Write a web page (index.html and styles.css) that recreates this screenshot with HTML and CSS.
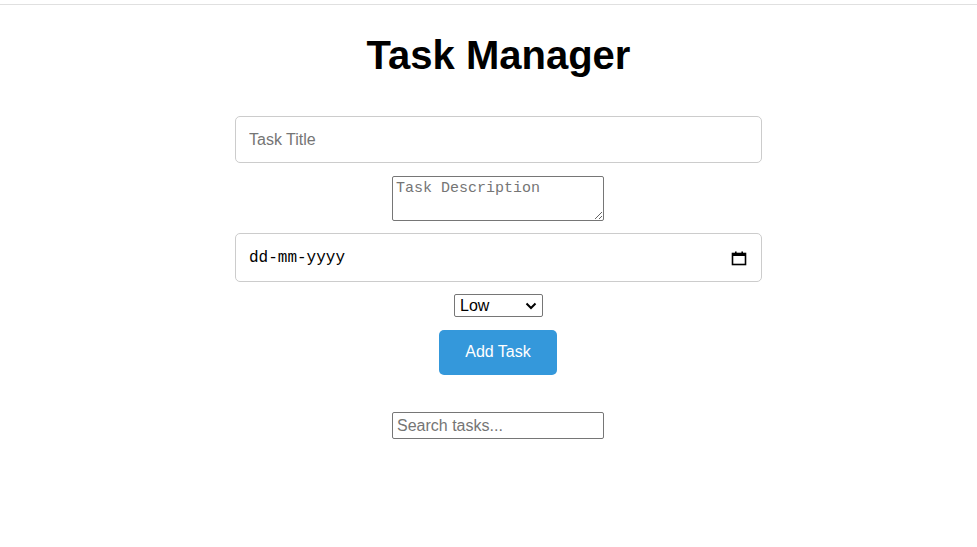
FILE: index.html
```html
<!DOCTYPE html>
<html>
<head>
<meta charset="utf-8">
<link rel="stylesheet" href="styles.css">
</head>
<body>
<div class="topline"></div>
<div class="page">
  <div class="app">
    <h1 class="title">Task Manager</h1>
    <form class="task-form">
      <input class="field field-title" type="text" placeholder="Task Title">
      <textarea class="desc" placeholder="Task Description"></textarea>
      <div class="field field-date">
        <span class="date-text">dd-mm-yyyy</span>
        <svg class="cal" width="16" height="16" viewBox="0 0 16 16">
          <rect x="1.5" y="3.5" width="13" height="11" fill="none" stroke="#000" stroke-width="1.6"/>
          <rect x="1.5" y="3" width="13" height="3" fill="#000"/>
          <rect x="4" y="1.5" width="1.6" height="3" fill="#000"/>
          <rect x="10.4" y="1.5" width="1.6" height="3" fill="#000"/>
        </svg>
      </div>
      <div class="select">
        <span>Low</span>
        <svg width="12" height="8" viewBox="0 0 12 8"><path d="M1.5 1.5 L6 6 L10.5 1.5" fill="none" stroke="#000" stroke-width="2"/></svg>
      </div>
      <button class="add-btn" type="button">Add Task</button>
    </form>
    <input class="search" type="text" placeholder="Search tasks...">
  </div>
</div>
</body>
</html>
```
FILE: styles.css
```css
html, body {
  margin: 0;
  padding: 0;
  background: #fff;
  font-family: "Liberation Sans", Arial, sans-serif;
}
.topline {
  height: 4px;
  border-bottom: 1px solid #e0e0e0;
}
.page {
  padding-left: 20px;
  display: flex;
  justify-content: center;
}
.app {
  width: 527px;
  display: flex;
  flex-direction: column;
  align-items: center;
}
.title {
  margin: 27px 0 0;
  height: 47px;
  font-size: 40px;
  line-height: 47px;
  font-weight: bold;
  color: #000;
}
.task-form {
  margin-top: 37px;
  width: 100%;
  display: flex;
  flex-direction: column;
  align-items: center;
}
.field {
  box-sizing: border-box;
  width: 527px;
  border: 1px solid #ccc;
  border-radius: 5px;
  background: #fff;
}
.field-title {
  height: 47px;
  padding: 0 13px;
  font-family: "Liberation Sans", Arial, sans-serif;
  font-size: 16px;
  color: #000;
  outline: none;
}
.field-title::placeholder {
  color: #757575;
}
.desc {
  box-sizing: border-box;
  margin-top: 13px;
  margin-right: 1px;
  width: 212px;
  height: 45px;
  padding: 3px 3px;
  border: 1px solid #767676;
  border-radius: 2px;
  font-family: "Liberation Mono", monospace;
  font-size: 15px;
  line-height: 18px;
  resize: both;
}
.desc::placeholder {
  color: #757575;
}
.field-date {
  margin-top: 12px;
  height: 49px;
  padding: 0 14px 0 13px;
  display: flex;
  align-items: center;
  justify-content: space-between;
}
.date-text {
  font-family: "Liberation Mono", monospace;
  font-size: 16px;
  color: #000;
}
.select {
  box-sizing: border-box;
  margin-top: 12px;
  width: 89px;
  height: 23px;
  border: 1px solid #767676;
  border-radius: 2px;
  padding: 0 5px 0 5px;
  display: flex;
  align-items: center;
  justify-content: space-between;
  font-size: 16px;
  color: #000;
}
.add-btn {
  margin-top: 13px;
  margin-right: 1px;
  width: 118px;
  height: 45px;
  padding: 0 0 2px;
  border: none;
  border-radius: 5px;
  background: #3498db;
  color: #fff;
  font-family: "Liberation Sans", Arial, sans-serif;
  font-size: 16px;
}
.search {
  box-sizing: border-box;
  margin-top: 37px;
  margin-right: 1px;
  width: 212px;
  height: 27px;
  padding: 0 4px;
  border: 1px solid #767676;
  border-radius: 2px;
  font-family: "Liberation Sans", Arial, sans-serif;
  font-size: 16px;
}
.search::placeholder {
  color: #757575;
}
```
